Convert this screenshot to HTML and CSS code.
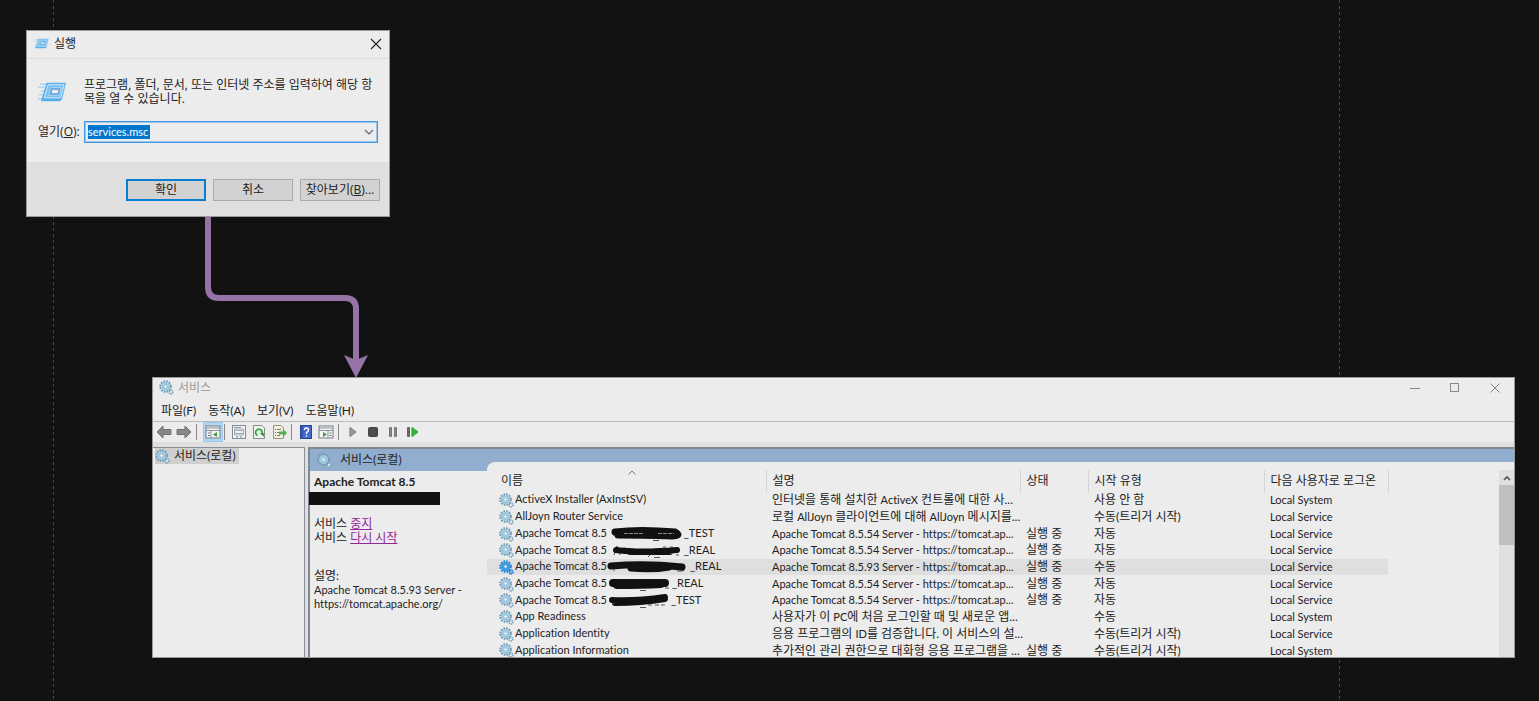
FILE: index.html
```html
<!DOCTYPE html>
<html lang="ko">
<head>
<meta charset="utf-8">
<title>services.msc</title>
<link rel="stylesheet" href="styles.css">
</head>
<body>
<svg width="0" height="0" class="defs">
<symbol id="gear" viewBox="0 0 16 16">
<circle cx="7" cy="7" r="5.4" fill="none" stroke="#6796b3" stroke-width="2.6" stroke-dasharray="1.7 1.12"/>
<circle cx="7" cy="7" r="3.7" fill="#f0f5f8" stroke="#9cc8e0" stroke-width="2.4"/>
<circle cx="7" cy="7" r="2" fill="#f2f2f2" stroke="#6f9fbd" stroke-width="0.8"/>
<circle cx="12.800" cy="12.800" r="2" fill="#e3edf2" stroke="#7ba6be" stroke-width="1.8" stroke-dasharray="1.3 0.6"/>
</symbol>
<symbol id="gear-on" viewBox="0 0 16 16">
<circle cx="7" cy="7" r="5.4" fill="none" stroke="#1b7fd0" stroke-width="2.6" stroke-dasharray="1.7 1.12"/>
<circle cx="7" cy="7" r="3.7" fill="#8cc4ee" stroke="#3a9be4" stroke-width="2.6"/>
<circle cx="7" cy="7" r="2" fill="#d5e8f6" stroke="#1b7fd0" stroke-width="0.8"/>
<circle cx="12.800" cy="12.800" r="2" fill="#7dbbe8" stroke="#1b7fd0" stroke-width="1.8" stroke-dasharray="1.3 0.6"/>
</symbol>
<symbol id="run" viewBox="0 0 30 22">
<path d="M2 3H10M0 6H8M3 10H8M1 14H6M0 18H5" stroke="#a5d0f0" stroke-width="1.4"/>
<path d="M9 1.500H29L25 18L23 20.500H3Z" fill="#5aaee8"/>
<path d="M10.500 3.500H27L23.500 17H6.500Z" fill="#7cc0f0" stroke="#d4ecfb" stroke-width="1"/>
<path d="M13 6.500H24L22 14.500H11Z" fill="#5ba9e2" stroke="#bfe0f6" stroke-width="0.800"/>
<path d="M14.500 8.500H21.500L20.500 12.500H13.500Z" fill="#eaf5fc" stroke="#7f9fc8" stroke-width="0.800"/>
</symbol>
</svg>

<div class="guide guide-left"></div>
<div class="guide guide-right"></div>

<form class="window run">
<div class="titlebar">
<svg class="run-small"><use href="#run"/></svg>
<span class="title">실행</span>
<button type="button" class="close" aria-label="닫기"><svg width="12" height="12" viewBox="0 0 12 12"><path d="M1 1L11 11M11 1L1 11" stroke="#222" stroke-width="1.1"/></svg></button>
</div>
<div class="run-body">
<svg class="run-big"><use href="#run"/></svg>
<p class="run-text">프로그램, 폴더, 문서, 또는 인터넷 주소를 입력하여 해당 항목을 열 수 있습니다.</p>
<label for="open">열기(<u>O</u>):</label>
<div class="combo">
<input id="open" class="combo-input" type="text" value="services.msc">
<button type="button" class="combo-arrow" aria-label="목록"><svg width="10" height="6" viewBox="0 0 10 6"><path d="M1 1L5 5L9 1" fill="none" stroke="#666" stroke-width="1.2"/></svg></button>
</div>
</div>
<div class="run-buttons">
<button type="button" class="btn btn-default">확인</button>
<button type="button" class="btn">취소</button>
<button type="button" class="btn">찾아보기(<u>B</u>)...</button>
</div>
</form>

<svg class="arrow" width="170" height="162" viewBox="0 0 170 162">
<path d="M8 0V70Q8 81 19 81H145Q156 81 156 92V148" fill="none" stroke="#9673a6" stroke-width="6"/>
<path d="M156 161L144 138L156 143L168 138Z" fill="#9673a6"/>
</svg>

<div class="window services">
<div class="titlebar svc-titlebar">
<svg class="ico"><use href="#gear"/></svg>
<span class="title title-off">서비스</span>
<div class="win-buttons">
<button type="button" aria-label="최소화"><svg width="10" height="10"><path d="M0 5.500H10" stroke="#888"/></svg></button>
<button type="button" aria-label="최대화"><svg width="10" height="10"><rect x="0.500" y="0.500" width="8" height="8" fill="none" stroke="#888"/></svg></button>
<button type="button" aria-label="닫기"><svg width="10" height="10"><path d="M0.500 0.500L9.500 9.500M9.500 0.500L0.500 9.500" stroke="#888"/></svg></button>
</div>
</div>
<div class="menu">
<button type="button">파일(F)</button>
<button type="button">동작(A)</button>
<button type="button">보기(V)</button>
<button type="button">도움말(H)</button>
</div>
<div class="toolbar">
<button type="button" aria-label="뒤로"><svg width="16" height="14" viewBox="0 0 16 14"><path d="M1 7L7 1V4.500H15V9.500H7V13Z" fill="#888" stroke="#707070"/></svg></button>
<button type="button" aria-label="앞으로"><svg width="16" height="14" viewBox="0 0 16 14"><path d="M15 7L9 1V4.500H1V9.500H9V13Z" fill="#888" stroke="#707070"/></svg></button>
<span class="sep"></span>
<button type="button" class="on" aria-label="콘솔 트리"><svg width="16" height="14" viewBox="0 0 16 14"><rect x="1" y="1" width="14" height="12" fill="#f4f4f4" stroke="#777f88"/><path d="M1 3H15M1 5.500H15M6 6V13" stroke="#8b939b"/><path d="M3 8H5M3 10.500H5" stroke="#777"/><path d="M12 7V12L8 9.500Z" fill="#3f9d46"/></svg></button>
<span class="sep"></span>
<button type="button" aria-label="속성"><svg width="14" height="14" viewBox="0 0 14 14"><rect x="0.500" y="0.500" width="13" height="13" fill="#f2f2f2" stroke="#8a8a8a"/><path d="M2 2.500H9" stroke="#7f9bb5"/><path d="M3 5.500H11M3 8.500H11" stroke="#9aabba"/><path d="M2.500 4V10H11.500V4Z" fill="none" stroke="#a0b0be"/><path d="M4 12H6M8 12H10" stroke="#5f8fb8"/></svg></button>
<button type="button" aria-label="새로 고침"><svg width="14" height="14" viewBox="0 0 14 14"><path d="M1.500 0.500H10L12.500 3V13.500H1.500Z" fill="#f4f4f4" stroke="#8a8a8a"/><path d="M5.500 10.500A3.300 3.300 0 1 1 9.500 9.500" fill="none" stroke="#36a842" stroke-width="1.800"/><path d="M7.500 8H12V12Z" fill="#36a842"/></svg></button>
<button type="button" aria-label="내보내기"><svg width="15" height="14" viewBox="0 0 15 14"><path d="M1.500 0.500H9L11.500 3V13.500H1.500Z" fill="#f2eee0" stroke="#9a9684"/><path d="M3 4.500H4M5 4.500H9M3 7.500H4M5 7.500H8M3 10.500H4M5 10.500H8" stroke="#777"/><path d="M7 6.500H11V4L15 8L11 12V9.500H7Z" fill="#53b34c"/></svg></button>
<span class="sep"></span>
<button type="button" aria-label="도움말"><svg width="12" height="14" viewBox="0 0 12 14"><rect x="0.500" y="0.500" width="11" height="13" fill="#4169cf" stroke="#27459b"/><path d="M2 1V13" stroke="#27459b"/><path d="M4.500 5Q4.500 3 6.500 3T8.500 5Q8.500 6.500 6.500 7.500V9M6.500 10.300V11.700" fill="none" stroke="#fff" stroke-width="1.400"/></svg></button>
<button type="button" aria-label="작업 창"><svg width="16" height="14" viewBox="0 0 16 14"><rect x="1" y="1" width="14" height="12" fill="#f4f4f4" stroke="#777f88"/><path d="M1 3H15M1 5.500H15M10 6V13" stroke="#8b939b"/><path d="M11.500 8H13.500M11.500 10.500H13.500" stroke="#777"/><path d="M5 7V12L9 9.500Z" fill="#3f9d46"/></svg></button>
<span class="sep"></span>
<button type="button" aria-label="시작"><svg width="8" height="10" viewBox="0 0 8 10"><path d="M1 0.500L7 5L1 9.500Z" fill="#999" stroke="#777"/></svg></button>
<button type="button" aria-label="중지"><svg width="10" height="10" viewBox="0 0 10 10"><rect x="0.500" y="0.500" width="9" height="9" rx="1" fill="#4e4e4e" stroke="#444"/></svg></button>
<button type="button" aria-label="일시 중지"><svg width="8" height="10" viewBox="0 0 8 10"><path d="M0.500 0.500H2.500V9.500H0.500ZM5.500 0.500H7.500V9.500H5.500Z" fill="#888" stroke="#777"/></svg></button>
<button type="button" aria-label="다시 시작"><svg width="12" height="10" viewBox="0 0 12 10"><path d="M0.500 0.500H2.500V9.500H0.500Z" fill="#666" stroke="#666"/><path d="M5 0.500L11 5L5 9.500Z" fill="#35b735" stroke="#279a2b"/></svg></button>
</div>

<div class="panes">
<div class="tree"><span class="tree-item"><svg class="ico"><use href="#gear"/></svg>서비스(로컬)</span></div>
<div class="main">
<div class="banner"><svg class="ico"><use href="#gear"/></svg>서비스(로컬)</div>
<div class="content">
<div class="detail">
<h2>Apache Tomcat 8.5</h2>
<div class="mask"></div>
<p>서비스 <a href="#">중지</a><br>서비스 <a href="#">다시 시작</a></p>
<p class="desc">설명:<br><span class="en">Apache Tomcat 8.5.93 Server - https://tomcat.apache.org/</span></p>
</div>
<div class="list">
<table>
<colgroup><col class="c-name"><col class="c-desc"><col class="c-state"><col class="c-start"><col class="c-logon"><col></colgroup>
<thead>
<tr><th>이름<svg class="sort" width="8" height="5" viewBox="0 0 8 5"><path d="M0.500 4.500L4 1L7.500 4.500" fill="none" stroke="#777"/></svg></th><th>설명</th><th>상태</th><th>시작 유형</th><th>다음 사용자로 로그온</th><th></th></tr>
</thead>
<tbody>
<tr><td class="en"><svg class="ico"><use href="#gear"/></svg>ActiveX Installer (AxInstSV)</td><td>인터넷을 통해 설치한 <span class="en">ActiveX</span> 컨트롤에 대한 사...</td><td></td><td>사용 안 함</td><td class="en">Local System</td><td></td></tr>
<tr><td class="en"><svg class="ico"><use href="#gear"/></svg>AllJoyn Router Service</td><td>로컬 <span class="en">AllJoyn</span> 클라이언트에 대해 <span class="en">AllJoyn</span> 메시지를...</td><td></td><td>수동(트리거 시작)</td><td class="en">Local Service</td><td></td></tr>
<tr><td class="en"><svg class="ico"><use href="#gear"/></svg>Apache Tomcat 8.5 <svg class="ink" width="74" height="14" viewBox="0 0 74 14"><path d="M38 12L41 9M43 13.500H49" stroke="#444"/><path d="M5 5Q30 2 65 5Q72 9 62 9Q30 8 8 8" fill="none" stroke="#111" stroke-width="7" stroke-linecap="round"/><path d="M14 6.500H34M48 6.500H64" stroke="#aaa" stroke-width="0.800" stroke-dasharray="4 1"/></svg>_TEST</td><td class="en">Apache Tomcat 8.5.54 Server - https://tomcat.ap...</td><td>실행 중</td><td>자동</td><td class="en">Local Service</td><td></td></tr>
<tr><td class="en"><svg class="ico"><use href="#gear"/></svg>Apache Tomcat 8.5 <svg class="ink" width="74" height="14" viewBox="0 0 74 14"><path d="M4 11L7 2L10 11M14 3V6M38 13L42 9M44 13.500H50M53 3H56M60 3H63M66 11H69" stroke="#555" fill="none"/><path d="M6 6Q30 9 67 6M20 8H60" fill="none" stroke="#111" stroke-width="6" stroke-linecap="round"/></svg>_REAL</td><td class="en">Apache Tomcat 8.5.54 Server - https://tomcat.ap...</td><td>실행 중</td><td>자동</td><td class="en">Local Service</td><td></td></tr>
<tr class="selected"><td class="en"><svg class="ico"><use href="#gear-on"/></svg>Apache Tomcat 8.5<svg class="ink" width="83" height="14" viewBox="0 0 83 14"><path d="M7 3V11M70 11H76L78 9" stroke="#555" fill="none"/><path d="M4 6Q38 3 75 7M24 8Q45 10 62 7" fill="none" stroke="#111" stroke-width="7" stroke-linecap="round"/></svg>_REAL</td><td class="en">Apache Tomcat 8.5.93 Server - https://tomcat.ap...</td><td>실행 중</td><td>수동</td><td class="en">Local Service</td><td></td></tr>
<tr><td class="en"><svg class="ico"><use href="#gear"/></svg>Apache Tomcat 8.5<svg class="ink" width="65" height="14" viewBox="0 0 65 14"><path d="M33 13.500H39M58 11H62" stroke="#555"/><path d="M6 6H58M10 8Q35 8 54 7" fill="none" stroke="#111" stroke-width="8" stroke-linecap="round"/></svg>_REAL</td><td class="en">Apache Tomcat 8.5.54 Server - https://tomcat.ap...</td><td>실행 중</td><td>자동</td><td class="en">Local Service</td><td></td></tr>
<tr><td class="en"><svg class="ico"><use href="#gear"/></svg>Apache Tomcat 8.5<svg class="ink" width="64" height="14" viewBox="0 0 64 14"><path d="M33 13.500H39M41 11H45M48 11H52M54 11H58" stroke="#555"/><path d="M5 6Q30 7 58 3M8 9Q34 9 58 5" fill="none" stroke="#111" stroke-width="6" stroke-linecap="round"/></svg>_TEST</td><td class="en">Apache Tomcat 8.5.54 Server - https://tomcat.ap...</td><td>실행 중</td><td>자동</td><td class="en">Local Service</td><td></td></tr>
<tr><td class="en"><svg class="ico"><use href="#gear"/></svg>App Readiness</td><td>사용자가 이 <span class="en">PC</span>에 처음 로그인할 때 및 새로운 앱...</td><td></td><td>수동</td><td class="en">Local System</td><td></td></tr>
<tr><td class="en"><svg class="ico"><use href="#gear"/></svg>Application Identity</td><td>응용 프로그램의 <span class="en">ID</span>를 검증합니다. 이 서비스의 설...</td><td></td><td>수동(트리거 시작)</td><td class="en">Local Service</td><td></td></tr>
<tr><td class="en"><svg class="ico"><use href="#gear"/></svg>Application Information</td><td>추가적인 관리 권한으로 대화형 응용 프로그램을 ...</td><td>실행 중</td><td>수동(트리거 시작)</td><td class="en">Local System</td><td></td></tr>
</tbody>
</table>
<div class="scroll">
<button type="button" aria-label="위로"><svg width="8" height="6" viewBox="0 0 8 6"><path d="M1 5L4 2L7 5" fill="none" stroke="#555" stroke-width="1.600"/></svg></button>
<div class="thumb"></div>
</div>
</div>
</div>
</div>
</div>
</div>
</body>
</html>
```
FILE: styles.css
```css
* { box-sizing: border-box; }
body { margin: 0; min-height: 100vh; position: relative; overflow: hidden; background: #121212; color: #222; font: 12px/14px "Open Sans", "Noto Sans CJK KR", sans-serif; }
button, input { font: inherit; color: inherit; margin: 0; padding: 0; border: 0; background: none; }
svg { display: block; flex: none; }
p, h2 { margin: 0; }
.defs { position: absolute; }
.en { font-size: 11px; }

/* page guides */
.guide { position: absolute; top: 0; bottom: 0; width: 1px; background: repeating-linear-gradient(#484848 0 3px, transparent 3px 6px); }
.guide-left { left: 53px; }
.guide-right { left: 1339px; }

.window { position: absolute; background: #ececec; border: 1px solid #999; }
.titlebar { display: flex; align-items: center; }
.arrow { position: absolute; left: 200px; top: 217px; }

/* run dialog */
.run { left: 26px; top: 30px; width: 364px; }
.run .titlebar { height: 28px; padding: 0 7px 2px; gap: 5px; border-bottom: 1px solid #ddd; }
.run-small { width: 15px; height: 11px; }
.close { margin-left: auto; }
.run-body { display: grid; grid-template-columns: 46px 1fr; row-gap: 15px; align-items: center; padding: 19px 11px; }
.run-big { width: 29px; height: 22px; }
.run-text { word-break: break-all; }
.combo { display: flex; align-items: center; justify-content: space-between; height: 22px; padding: 0 3px; border: 1px solid #3e97e0; outline: 1px solid #9cc8ee; outline-offset: -2px; }
.combo-input { width: 62px; height: 14px; background: #0078d0; color: #fff; font: 11px/14px Lato, sans-serif; }
.run-buttons { display: flex; justify-content: flex-end; gap: 7px; padding: 17px 9px 15px; background: #dfdfdf; }
.btn { width: 80px; height: 22px; background: #d2d2d2; border: 1px solid #aaa; }
.btn-default { border: 2px solid #0b7fcf; }

/* services console */
.services { left: 152px; right: 24px; top: 377px; height: 281px; display: flex; flex-direction: column; overflow: hidden; font-family: Lato, "Noto Sans CJK KR", sans-serif; font-variant-ligatures: none; }
.svc-titlebar { height: 19px; padding: 0 14px 0 6px; gap: 4px; }
.title-off { color: #999; }
.win-buttons { display: flex; gap: 30px; margin-left: auto; }
.ico { width: 15px; height: 15px; }
.menu { display: flex; gap: 12px; height: 25px; padding: 3px 8px 0; align-items: center; border-bottom: 1px solid #bbb; }
.toolbar { display: flex; align-items: center; height: 20px; padding: 0 3px; gap: 4px; }
.toolbar button { display: grid; place-items: center; height: 20px; min-width: 16px; }
.toolbar .on { width: 20px; background: #b5d6f2; border: 1px solid #9cc8ee; }
.sep { width: 1px; height: 16px; margin-right: 2px; background: #888; }
.on + .sep { margin-left: -3px; }
.panes { display: flex; flex: 1; min-height: 0; padding-top: 5px; gap: 3px; background: #dfdfdf; }
.tree { width: 152px; background: #ececec; border: 1px solid #8a8e98; border-width: 1px 1px 0 0; }
.tree-item { display: inline-flex; align-items: center; gap: 4px; height: 16px; margin-left: 2px; padding-right: 3px; background: #cfcfcf; }
.main { flex: 1; min-width: 0; display: flex; flex-direction: column; border: 2px solid #808890; border-width: 2px 0 0 2px; background: #ececec; }
.banner { display: flex; align-items: center; gap: 8px; height: 22px; padding-left: 7px; background: #91aece; }
.content { display: flex; flex: 1; min-height: 0; }
.detail { width: 177px; padding: 4px; }
.detail h2 { font-size: 12px; line-height: 14px; font-weight: bold; }
.mask { width: 131px; height: 13px; margin: 3px 0 12px -5px; background: #111; }
.detail a { color: #93279b; }
.desc { margin-top: 24px; }
.list { flex: 1; min-width: 0; display: flex; margin-top: -9px; background: #ececec; border-top-left-radius: 8px; padding-top: 8px; }
table { flex: 1; table-layout: fixed; width: 100%; height: 189px; border-collapse: collapse; white-space: nowrap; }
.c-name { width: 279px; }
.c-desc { width: 254px; }
.c-state { width: 68px; }
.c-start { width: 176px; }
.c-logon { width: 124px; }
th { position: relative; height: 22px; padding: 0 6px; font-weight: normal; text-align: left; border-right: 1px solid #d4d4d4; }
th:last-child { border: 0; }
th:first-child { padding-left: 14px; }
td { padding: 0 0 0 6px; line-height: 14px; }
td:first-child { padding-left: 12px; }
td svg { display: inline-block; vertical-align: middle; }
td .ico { margin-right: 1px; }
.sort { position: absolute; left: 141px; top: 0; }
.selected td:not(:last-child) { background: #dfdfdf; }
.scroll { width: 15px; background: #dfdfdf; }
.scroll button { display: grid; place-items: center; width: 15px; height: 15px; }
.thumb { height: 60px; background: #c0c0c0; }
```
